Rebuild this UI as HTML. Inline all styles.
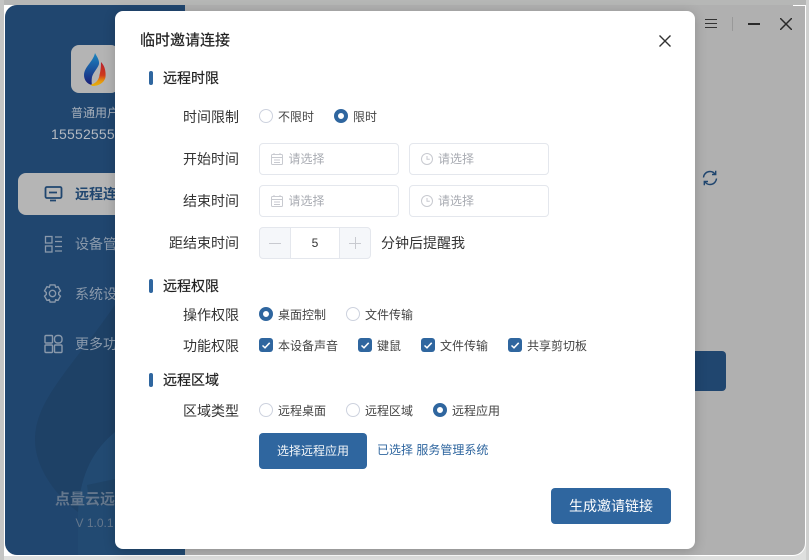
<!DOCTYPE html>
<html><head><meta charset="utf-8">
<style>
*{box-sizing:border-box;margin:0;padding:0}
html,body{width:809px;height:560px;overflow:hidden;background:#dedfde;font-family:"Liberation Sans","Noto Sans CJK SC",sans-serif}
.a{position:absolute;white-space:nowrap}
#top{left:0;top:0;width:809px;height:5px;background:#b6b7b6}
#lft{left:0;top:0;width:4px;height:560px;background:#c4c5c4}
#rgt{left:806px;top:0;width:3px;height:560px;background:#d0d1d0}
#win{left:4px;top:5px;width:802px;height:551px;background:#fff;border-radius:0 0 13px 0}
#main{left:5px;top:5px;width:800px;height:550px;background:#b0b0b0;border-radius:12px 0 12px 12px;overflow:hidden}
#side{left:0;top:0;width:180px;height:550px;background:#20466f}
.lb{font-size:14px;color:#333;line-height:18px;text-align:right;width:100px;left:139px}
.h{font-size:14px;color:#1f1f1f;left:163px;line-height:20px;-webkit-text-stroke:.2px #1f1f1f}
.bar{left:149px;width:4px;height:14px;background:#2f669f;border-radius:2px}
.t{font-size:12px;color:#444;line-height:16px}
.r{width:14px;height:14px;border-radius:50%;border:1px solid #cdd2de;background:#fff}
.r.on{border:4px solid #2f669f}
.c{width:14px;height:14px;border-radius:3px;background:#2f669f}
.c svg{display:block}
.in{width:140px;height:32px;border:1px solid #e4e7ed;border-radius:4px;background:#fff}
.ph{font-size:12px;color:#a8abb2;line-height:16px}
.nv{font-size:14px;color:#8a99ab;left:70px;line-height:20px;font-weight:400}
</style></head><body>
<div class="a" id="top"></div><div class="a" id="lft"></div><div class="a" id="rgt"></div>
<div class="a" id="win"></div>
<div class="a" id="main">
 <div class="a" id="side">
  <svg class="a" style="left:0;top:0" width="180" height="550">
   <path d="M110 300C65 365 30 395 30 435C30 462 50 490 73 507L180 507V300Z" fill="#1e4166"/>
   <path d="M73 507C75 470 88 445 110 427L180 400V550H73Z" fill="#224a72"/>
   <path d="M82 480L110 474L180 470V500L85 500Z" fill="#1f4468"/>
  </svg>
  <div class="a" style="left:66px;top:40px;width:48px;height:48px;border-radius:8px;background:#b4b4b4"></div>
  <svg class="a" style="left:79px;top:48px" width="22" height="33" viewBox="0 0 22 33">
   <defs>
    <linearGradient id="g1" x1="0" y1="0" x2="0" y2="1"><stop offset="0" stop-color="#1b86c0"/><stop offset=".55" stop-color="#1a4f9a"/><stop offset="1" stop-color="#1a1f78"/></linearGradient>
    <linearGradient id="g2" x1="0" y1="0" x2="0" y2="1"><stop offset="0" stop-color="#b8222e"/><stop offset=".55" stop-color="#cf3a1c"/><stop offset=".8" stop-color="#e5970d"/><stop offset="1" stop-color="#e5b00d"/></linearGradient>
   </defs>
   <path d="M11 0C13 4 15.500 7 15 11C14 15 9.500 19 8 24C7.500 27 7.500 30 8 32C3 31 0 27 0 22C0 14 9 9 11 0Z" fill="url(#g1)"/>
   <path d="M17 9C21 13 22 19 21.500 24C20.500 30 14 33 9 33C8 33 7.500 32.700 7 31.500C11 31 15 27 15.500 22C16.500 18 17 14 17 9Z" fill="url(#g2)"/>
  </svg>
  <div class="a" style="left:66px;top:100px;font-size:12px;line-height:16px;color:#a5aeb9">普通用户</div>
  <div class="a" style="left:46px;top:119px;font-size:14px;line-height:20px;color:#b3b9c1;letter-spacing:.2px">15552555555</div>
  <div class="a" style="left:13px;top:168px;width:167px;height:42px;background:#b5b5b5;border-radius:8px 0 0 8px"></div>
  <svg class="a" style="left:39px;top:179px" width="20" height="20" fill="none" stroke="#20466f" stroke-width="1.800"><rect x="1.500" y="3" width="16" height="11" rx="1.500"/><path d="M5 8.500h8M6 16.500h6"/></svg>
  <div class="a" style="left:70px;top:179px;font-size:14px;line-height:20px;color:#20466f;font-weight:700">远程连接</div>
  <svg class="a" style="left:39px;top:229px" width="20" height="20" fill="none" stroke="#8a99ab" stroke-width="1.300"><rect x="1.500" y="2.500" width="6.500" height="6.500"/><rect x="1.500" y="12" width="6.500" height="6"/><path d="M11 3h7M11 7.500h7M11 12.500h7M11 17h7"/></svg>
  <div class="a nv" style="top:229px">设备管理</div>
  <svg class="a" style="left:37px;top:278px" width="21" height="21" viewBox="0 0 20 20" fill="none" stroke="#8a99ab" stroke-width="1.300"><path d="M7.700 1.800h4.600l.7 2.300 2.300-.6 2.300 4-1.700 1.600v1.800l1.700 1.600-2.300 4-2.300-.6-.7 2.300H7.700l-.7-2.300-2.300.6-2.300-4 1.700-1.600V9.100L2.400 7.500l2.300-4 2.300.6z"/><circle cx="10" cy="10" r="3"/></svg>
  <div class="a nv" style="top:279px">系统设置</div>
  <svg class="a" style="left:39px;top:329px" width="20" height="20" fill="none" stroke="#8a99ab" stroke-width="1.400"><rect x="1" y="1.500" width="7.500" height="7.500" rx="1"/><rect x="10.500" y="1.500" width="7.500" height="7.500" rx="3"/><rect x="1" y="11" width="7.500" height="7.500" rx="1"/><rect x="10.500" y="11" width="7.500" height="7.500" rx="1"/></svg>
  <div class="a nv" style="top:329px">更多功能</div>
  <div class="a" style="left:50px;top:485px;font-size:15px;line-height:20px;font-weight:700;color:#64778d">点量云远程</div>
  <div class="a" style="left:70.500px;top:510px;font-size:12px;line-height:16px;color:#64778d">V 1.0.1</div>
 </div>
 <div class="a" style="left:500px;top:346px;width:221px;height:40px;background:#20466f;border-radius:4px"></div>
 <svg class="a" style="left:696px;top:164px" width="18" height="18" viewBox="0 0 18 18" fill="none" stroke="#20466f" stroke-width="1.400"><path d="M2.500 8.500C2.800 5 5.500 2.500 9 2.500c2.300 0 4 1 5 2.700"/><path d="M14.700 1.800v3.700H11"/><path d="M15.500 9.500c-.3 3.500-3 6-6.500 6-2.300 0-4-1-5-2.700"/><path d="M3.300 16.200v-3.700H7"/></svg>
 <svg class="a" style="left:699px;top:12px" width="14" height="14" stroke="#333" stroke-width="1"><path d="M1 2.500h12M1 6.500h12M1 10.500h12"/></svg>
 <div class="a" style="left:727px;top:12px;width:1px;height:14px;background:#999"></div>
 <div class="a" style="left:743px;top:18px;width:12px;height:1.500px;background:#2a2a2a"></div>
 <svg class="a" style="left:775px;top:13px" width="12" height="12" stroke="#2a2a2a" stroke-width="1.500"><path d="M0 0L12 12M12 0L0 12"/></svg>
</div>
<div class="a" style="left:793px;top:5px;width:12px;height:1px;background:#fff"></div>

<div class="a" style="left:115px;top:11px;width:580px;height:538px;background:#fff;border-radius:8px;box-shadow:0 2px 12px rgba(0,0,0,.2)"></div>

<div class="a" style="left:140px;top:31px;font-size:15px;line-height:20px;color:#1f1f1f;-webkit-text-stroke:.2px #1f1f1f">临时邀请连接</div>
<svg class="a" style="left:659px;top:35px" width="12" height="12" stroke="#333" stroke-width="1.400"><path d="M.5 .5L11.500 11.500M11.500 .5L.5 11.500"/></svg>

<div class="a bar" style="top:71px"></div><div class="a h" style="top:68px">远程时限</div>
<div class="a lb" style="top:108px">时间限制</div>
<div class="a r" style="left:259px;top:109px"></div><div class="a t" style="left:278px;top:109px">不限时</div>
<div class="a r on" style="left:334px;top:109px"></div><div class="a t" style="left:353px;top:109px">限时</div>

<div class="a lb" style="top:150px">开始时间</div>
<div class="a in" style="left:259px;top:143px"></div>
<svg class="a" style="left:271px;top:153px" width="12" height="12" fill="none" stroke="#c8cad0"><rect x=".5" y="1.500" width="11" height="10" rx="1"/><path d="M.5 4.500h11M3 7h6M3 9.500h6M3 0v2M9 0v2"/></svg>
<div class="a ph" style="left:288.500px;top:151px">请选择</div>
<div class="a in" style="left:409px;top:143px"></div>
<svg class="a" style="left:421px;top:153px" width="12" height="12" fill="none" stroke="#c8cad0"><circle cx="6" cy="6" r="5.500"/><path d="M6 3v3.200h2.800"/></svg>
<div class="a ph" style="left:438px;top:151px">请选择</div>

<div class="a lb" style="top:192px">结束时间</div>
<div class="a in" style="left:259px;top:185px"></div>
<svg class="a" style="left:271px;top:195px" width="12" height="12" fill="none" stroke="#c8cad0"><rect x=".5" y="1.500" width="11" height="10" rx="1"/><path d="M.5 4.500h11M3 7h6M3 9.500h6M3 0v2M9 0v2"/></svg>
<div class="a ph" style="left:288.500px;top:193px">请选择</div>
<div class="a in" style="left:409px;top:185px"></div>
<svg class="a" style="left:421px;top:195px" width="12" height="12" fill="none" stroke="#c8cad0"><circle cx="6" cy="6" r="5.500"/><path d="M6 3v3.200h2.800"/></svg>
<div class="a ph" style="left:438px;top:193px">请选择</div>

<div class="a lb" style="top:234px">距结束时间</div>
<div class="a" style="left:259px;top:227px;width:112px;height:32px;border:1px solid #e4e7ed;border-radius:4px;background:#f5f7fa"></div>
<div class="a" style="left:290px;top:228px;width:50px;height:30px;background:#fff;border-left:1px solid #e4e7ed;border-right:1px solid #e4e7ed;font-size:12px;color:#333;line-height:30px;text-align:center">5</div>
<svg class="a" style="left:268px;top:236px" width="14" height="14" stroke="#c8cad0"><path d="M1 7.500h12"/></svg>
<svg class="a" style="left:348px;top:236px" width="14" height="14" stroke="#c8cad0"><path d="M1 7.500h12M7.500 1v12"/></svg>
<div class="a" style="left:381px;top:234px;font-size:14px;line-height:18px;color:#333">分钟后提醒我</div>

<div class="a bar" style="top:279px"></div><div class="a h" style="top:276px">远程权限</div>
<div class="a lb" style="top:306px">操作权限</div>
<div class="a r on" style="left:259px;top:307px"></div><div class="a t" style="left:278px;top:307px">桌面控制</div>
<div class="a r" style="left:346px;top:307px"></div><div class="a t" style="left:365px;top:307px">文件传输</div>

<div class="a lb" style="top:337px">功能权限</div>
<div class="a c" style="left:259px;top:338px"><svg width="14" height="14" fill="none" stroke="#fff" stroke-width="1.500"><path d="M3.500 7.500l2.500 2.300 4.700-5"/></svg></div><div class="a t" style="left:278px;top:338px">本设备声音</div>
<div class="a c" style="left:358px;top:338px"><svg width="14" height="14" fill="none" stroke="#fff" stroke-width="1.500"><path d="M3.500 7.500l2.500 2.300 4.700-5"/></svg></div><div class="a t" style="left:377px;top:338px">键鼠</div>
<div class="a c" style="left:421px;top:338px"><svg width="14" height="14" fill="none" stroke="#fff" stroke-width="1.500"><path d="M3.500 7.500l2.500 2.300 4.700-5"/></svg></div><div class="a t" style="left:440px;top:338px">文件传输</div>
<div class="a c" style="left:508px;top:338px"><svg width="14" height="14" fill="none" stroke="#fff" stroke-width="1.500"><path d="M3.500 7.500l2.500 2.300 4.700-5"/></svg></div><div class="a t" style="left:527px;top:338px">共享剪切板</div>

<div class="a bar" style="top:373px"></div><div class="a h" style="top:370px">远程区域</div>
<div class="a lb" style="top:402px">区域类型</div>
<div class="a r" style="left:259px;top:403px"></div><div class="a t" style="left:278px;top:403px">远程桌面</div>
<div class="a r" style="left:346px;top:403px"></div><div class="a t" style="left:365px;top:403px">远程区域</div>
<div class="a r on" style="left:433px;top:403px"></div><div class="a t" style="left:452px;top:403px">远程应用</div>

<div class="a" style="left:259px;top:433px;width:108px;height:36px;background:#2f669f;border-radius:4px;color:#f2f5f8;font-size:12px;line-height:36px;text-align:center">选择远程应用</div>
<div class="a" style="left:377px;top:442px;font-size:12px;line-height:16px;color:#2f669f">已选择 服务管理系统</div>
<div class="a" style="left:551px;top:488px;width:120px;height:36px;background:#2f669f;border-radius:4px;color:#fff;font-size:14px;line-height:37px;text-align:center">生成邀请链接</div>
</body></html>
